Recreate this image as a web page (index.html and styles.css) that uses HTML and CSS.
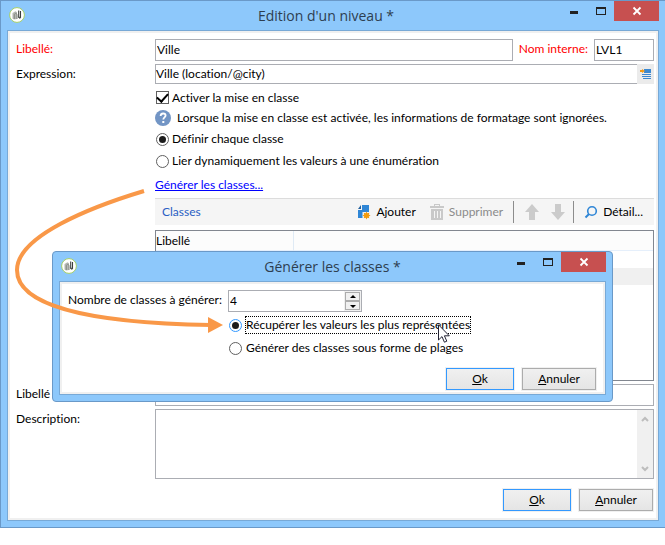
FILE: index.html
```html
<!DOCTYPE html>
<html lang="fr">
<head>
<meta charset="utf-8">
<title>Edition d'un niveau</title>
<link rel="stylesheet" href="styles.css">
</head>
<body>
<svg class="defs" aria-hidden="true">
  <symbol id="logo" viewBox="0 0 16 16">
    <circle cx="8" cy="8" r="7.400" fill="#fff" stroke="#a5cf66"/>
    <path d="M3.500 6 6.500 4.200 8 5.200V12L5 12.500 3.500 11.500Z" fill="#b4b7b2"/>
    <path d="M5.300 12V8c0-1 .8-1.600 1.500-1.600S8 7 8 7.800V12" fill="none" stroke="#868a84"/>
    <path d="M9.700 3.500v6.700l1.800.4V4" fill="none" stroke="#3c403c" stroke-width="1.100"/>
    <path d="M8.600 9.500l2.200 2.500 1.200-2z" fill="#50544f"/>
  </symbol>
  <symbol id="minimize" viewBox="0 0 10 10"><path d="M1 5h8v3H1z" fill="#222"/></symbol>
  <symbol id="maximize" viewBox="0 0 10 10"><path d="M0 1h10v8H0zM1 3v5h8V3z" fill="#222" fill-rule="evenodd"/></symbol>
  <symbol id="close" viewBox="0 0 10 10"><path d="M1.500 1.500l7 7M8.500 1.500l-7 7" stroke="#fff" stroke-width="1.800"/></symbol>
</svg>

<main class="window">
  <header class="titlebar main-title">
    <svg class="logo"><use href="#logo"/></svg>
    <h1>Edition d'un niveau *</h1>
    <div class="controls">
      <button aria-label="Réduire"><svg><use href="#minimize"/></svg></button>
      <button aria-label="Agrandir"><svg><use href="#maximize"/></svg></button>
      <button class="close" aria-label="Fermer"><svg><use href="#close"/></svg></button>
    </div>
  </header>

  <form class="pane">
    <div class="form">
      <label class="required" for="label">Libellé:</label>
      <div class="names">
        <input class="text wide" id="label" type="text" value="Ville">
        <label class="required" for="name">Nom interne:</label>
        <input class="text short" id="name" type="text" value="LVL1">
      </div>

      <label for="expression">Expression:</label>
      <div class="expression">
        <input class="text wide" id="expression" type="text" value="Ville (location/@city)">
        <button class="picker" type="button" aria-label="Modifier l'expression">
          <svg viewBox="0 0 12 12"><path d="M4 1h7v4H4zM2 6h9v1H2zM2 8h9v1H2zM3 10h8v1H3z" fill="#3c88d0"/><path d="M0 2h2V1l3 2-3 2V4H0z" fill="#f39a14"/></svg>
        </button>
      </div>

      <div class="settings">
        <label class="option"><input type="checkbox" checked>Activer la mise en classe</label>
        <p class="option note">
          <svg viewBox="0 0 16 16"><circle cx="8" cy="8" r="8" fill="#7295c5"/><path d="M5.600 6c.1-1.700 1.100-2.500 2.500-2.500 1.500 0 2.500.8 2.500 2.100 0 1.800-2.300 1.900-2.300 4" fill="none" stroke="#fff" stroke-width="1.800"/><path d="M7.300 11h2v2h-2z" fill="#fff"/></svg>
          Lorsque la mise en classe est activée, les informations de formatage sont ignorées.
        </p>
        <label class="option"><input type="radio" name="mode" checked>Définir chaque classe</label>
        <label class="option"><input type="radio" name="mode">Lier dynamiquement les valeurs à une énumération</label>
        <a class="generate" href="#generate">Générer les classes...</a>

        <div class="toolbar">
          <h2>Classes</h2>
          <button type="button"><svg viewBox="0 0 14 16"><path d="M5 1h7v7H9v6H1V6h4z" fill="#2f86d6"/><path d="M1 5 4 1v4z" fill="#215f9d"/><path d="M5.500 8H14v7H5.500z" fill="#f5f5f5"/><path d="m9.500 7.500.9 1.700 1.900-.5-.5 1.900 1.700.9-1.700.9.5 1.900-1.900-.5-.9 1.700-.9-1.700-1.900.5.500-1.900-1.700-.9 1.700-.9-.5-1.900 1.900.5z" fill="#f39a0c"/></svg>Ajouter</button>
          <button type="button" disabled><svg viewBox="0 0 14 16"><path d="M0 2h4V0h6v2h4v2H0zM5 1v1h4V1zM1 5h12v11H1zM4 7v7h1V7zM7 7v7h1V7zM10 7v7h1V7z" fill="#c9c9c9" fill-rule="evenodd"/></svg>Supprimer</button>
          <div class="order">
            <button type="button" disabled aria-label="Monter"><svg viewBox="0 0 14 16"><path d="M7 0l7 8h-4v8H4V8H0z" fill="#cbcbcb"/></svg></button>
            <button type="button" disabled aria-label="Descendre"><svg viewBox="0 0 14 16"><path d="M7 16l7-8h-4V0H4v8H0z" fill="#cbcbcb"/></svg></button>
          </div>
          <button type="button"><svg viewBox="0 0 14 16"><circle cx="8" cy="7" r="4.300" fill="none" stroke="#2f86d6" stroke-width="1.600"/><path d="M5 10l-3.500 3.500" stroke="#2f86d6" stroke-width="2"/></svg>Détail...</button>
        </div>

        <div class="list">
          <table>
            <thead><tr><th class="name">Libellé</th><th></th></tr></thead>
            <tbody>
              <tr><td></td><td></td></tr>
              <tr class="alternate"><td></td><td></td></tr>
            </tbody>
          </table>
        </div>
      </div>

      <label for="other">Libellé</label>
      <input class="text" id="other" type="text">

      <label for="description">Description:</label>
      <div class="memo">
        <textarea id="description"></textarea>
        <div class="scrollbar" aria-hidden="true">
          <svg viewBox="0 0 8 8"><path d="M1 6l3-3 3 3" fill="none" stroke="#bdbdbd" stroke-width="2"/></svg>
          <svg viewBox="0 0 8 8"><path d="M1 2l3 3 3-3" fill="none" stroke="#bdbdbd" stroke-width="2"/></svg>
        </div>
      </div>
    </div>
    <footer class="actions">
      <button class="push default" type="button"><span><u>O</u>k</span></button>
      <button class="push" type="button"><span><u>A</u>nnuler</span></button>
    </footer>
  </form>

  <section class="window dialog" id="generate" role="dialog" aria-labelledby="dialog-title">
    <header class="titlebar">
      <svg class="logo"><use href="#logo"/></svg>
      <h1 id="dialog-title">Générer les classes *</h1>
      <div class="controls">
        <button aria-label="Réduire"><svg><use href="#minimize"/></svg></button>
        <button aria-label="Agrandir"><svg><use href="#maximize"/></svg></button>
        <button class="close" aria-label="Fermer"><svg><use href="#close"/></svg></button>
      </div>
    </header>
    <form class="pane">
      <div class="form count-form">
        <label for="count">Nombre de classes à générer:</label>
        <div class="spin">
          <input class="text" id="count" type="number" value="4">
          <div class="steps">
            <button type="button" aria-label="Augmenter"><svg viewBox="0 0 6 4"><path d="M3 0l3 3H0z"/></svg></button>
            <button type="button" aria-label="Diminuer"><svg viewBox="0 0 6 4"><path d="M0 1h6L3 4z"/></svg></button>
          </div>
        </div>
        <div class="choices">
          <label class="option focused"><input type="radio" name="method" checked><span>Récupérer les valeurs les plus représentées</span></label>
          <label class="option"><input type="radio" name="method"><span>Générer des classes sous forme de plages</span></label>
        </div>
      </div>
      <footer class="actions">
        <button class="push default" type="button"><span><u>O</u>k</span></button>
        <button class="push" type="button"><span><u>A</u>nnuler</span></button>
      </footer>
    </form>
  </section>

  <svg class="callout" viewBox="0 0 240 160" aria-hidden="true">
    <path d="M143 11C90 27 16 56 16 90C16 125 85 143 210 145" fill="none" stroke="#f99848" stroke-width="4"/>
    <path d="M207 137l15 8-15 8z" fill="#f99848"/>
  </svg>
  <svg class="pointer" viewBox="0 0 12 19" aria-hidden="true">
    <path d="M.5.800v15.200l3.500-3.400 2.400 5.600 2.400-1-2.400-5.400h4.900z" fill="#fff" stroke="#223"/>
  </svg>
</main>
</body>
</html>
```

FILE: styles.css
```css
* {
  box-sizing: border-box;
}

body {
  margin: 0;
  background: #fff;
  color: #000;
  font: 12px/16px Lato, "Noto Sans", sans-serif;
  font-variant-ligatures: none;
}

button,
input,
textarea {
  margin: 0;
  padding: 0;
  border: 0;
  border-radius: 0;
  background: none;
  color: inherit;
  font: inherit;
}

h1,
h2,
p {
  margin: 0;
  font-weight: 400;
}

.defs {
  position: absolute;
  width: 0;
  height: 0;
}

/* Window frame */

.window {
  position: relative;
  padding: 0 6px 6px;
  border: 1px solid #6a99c8;
  border-right: 0;
  background: #8dc8fb;
}

.titlebar {
  display: grid;
  grid-template-columns: 1fr auto 1fr;
  height: 29px;
}

.titlebar h1 {
  padding-top: 5px;
  color: #2d3e50;
  font: 14px/20px "Open Sans", "Noto Sans", sans-serif;
}

.main-title h1 {
  padding-right: 14px;
}

.logo {
  width: 16px;
  height: 16px;
  margin: 6px 2px;
}

.controls {
  display: flex;
  justify-content: flex-end;
}

.controls button {
  display: grid;
  place-items: center;
  width: 27px;
  height: 20px;
}

.controls .close {
  width: 45px;
  background: #c75050;
}

.controls svg {
  width: 10px;
  height: 10px;
}

.pane {
  padding: 8px 4px 9px 8px;
  border: 1px solid #78a9d6;
  outline: 2px solid #f0f0f0;
  outline-offset: -3px;
  background: #fff;
}

/* Form */

.form {
  display: grid;
  grid-template-columns: 139px 1fr;
  gap: 3px 0;
}

.form > label,
.names label {
  padding-top: 2px;
}

.required {
  color: #f00;
}

.text {
  width: 100%;
  height: 22px;
  padding: 0 1px 2px;
  border: 1px solid #abadb3;
  background: #fff;
}

.names {
  display: flex;
  gap: 6px;
}

.names .wide,
.expression .wide {
  flex: 1;
  min-width: 0;
}

.names .short {
  width: 60px;
}

.expression {
  display: flex;
}

.expression .text {
  height: 20px;
  padding-left: 0;
  border-right: 0;
}

.picker {
  display: grid;
  place-items: center;
  width: 17px;
  background: #ebebeb;
}

.picker svg {
  width: 12px;
  height: 12px;
}

.settings {
  display: grid;
  grid-column: 2;
  grid-template-rows: 21px 20px 22px 22px 26px;
}

.option {
  display: flex;
  align-items: center;
  gap: 3px;
}

.option input {
  display: grid;
  place-items: center;
  width: 13px;
  height: 13px;
  margin-left: 1px;
  border: 1px solid #606060;
  background: #fff;
  appearance: none;
}

.option input[type="radio"] {
  border-radius: 50%;
}

.option input[type="radio"]:checked::before {
  width: 7px;
  height: 7px;
  border-radius: 50%;
  background: #1c1c1c;
  content: "";
}

.option input[type="checkbox"]:checked::before {
  width: 9px;
  height: 5px;
  border: solid #000;
  border-width: 0 0 2px 2px;
  transform: translateY(-1px) rotate(-48deg);
  content: "";
}

.note {
  gap: 6px;
}

.note svg {
  width: 16px;
  height: 16px;
}

.generate {
  align-self: center;
  justify-self: start;
  color: #00f;
}

/* Class list */

.toolbar {
  display: flex;
  align-items: center;
  gap: 14px;
  height: 27px;
  padding: 0 11px 0 7px;
  border-top: 1px solid #dcdcdc;
  background: #f5f5f5;
}

.toolbar h2 {
  margin-right: auto;
  color: #2a5fc4;
  font-size: 12px;
}

.toolbar button {
  display: flex;
  align-items: center;
  gap: 5px;
}

.toolbar button:disabled {
  color: #8b8b8b;
}

.toolbar svg {
  width: 14px;
  height: 16px;
}

.order {
  display: flex;
  align-items: center;
  gap: 12px;
  height: 22px;
  margin: 0 -4px;
  padding: 0 8px 0 11px;
  border: solid #8c8c8c;
  border-width: 0 1px;
}

.list {
  height: 151px;
  margin-top: 5px;
  border: 1px solid #828790;
}

.list table {
  width: 100%;
  border-spacing: 0;
  table-layout: fixed;
}

.list th {
  height: 20px;
  padding: 0;
  border-bottom: 1px solid #e5effb;
  background: #fcfcfc;
  font-weight: 400;
  text-align: left;
}

.list .name {
  width: 138px;
  border-right: 1px solid #dfeaf5;
}

.list td {
  height: 17px;
  padding: 0;
}

.list .alternate td {
  background: #f0f0f0;
}

.memo {
  display: flex;
  height: 70px;
  border: 1px solid #abadb3;
}

.memo textarea {
  flex: 1;
  resize: none;
}

.scrollbar {
  display: flex;
  flex-direction: column;
  justify-content: space-between;
  align-items: center;
  width: 16px;
  padding: 5px 0;
  background: #f0f0f0;
}

.scrollbar svg {
  width: 8px;
  height: 8px;
}

/* Buttons */

.actions {
  display: flex;
  justify-content: flex-end;
  gap: 8px;
  padding: 10px 1px 0 0;
}

.push {
  width: 74px;
  height: 22px;
  border: 1px solid #acacac;
  outline: 1px solid #f0f0f0;
  background: linear-gradient(#f0f0f0, #e5e5e5);
}

.push.default {
  width: 68px;
  border-color: #3399ff;
}

/* Generation dialog */

.dialog {
  position: absolute;
  top: 250px;
  right: 52px;
  left: 51px;
  border-right: 1px solid #6a99c8;
  border-radius: 4px;
}

.dialog .pane {
  padding-right: 9px;
  padding-bottom: 4px;
}

.dialog .actions {
  padding: 9px 0 0;
}

.count-form {
  grid-template-columns: 160px 1fr;
  gap: 2px 0;
}

.spin {
  display: flex;
  width: 134px;
  border: 1px solid #abadb3;
}

.spin .text {
  flex: 1;
  height: 20px;
  min-width: 0;
  border: 0;
  appearance: textfield;
}

.spin .text::-webkit-inner-spin-button {
  display: none;
}

.steps {
  display: grid;
  width: 17px;
  padding: 1px;
  background: #f0f0f0;
}

.steps button {
  display: grid;
  place-items: center;
  border: 1px solid #acacac;
}

.steps svg {
  width: 6px;
  height: 4px;
}

.choices {
  display: grid;
  grid-column: 2;
  grid-template-rows: 22px 22px;
  gap: 1px;
}

.choices span {
  border: 1px dotted transparent;
}

.choices .focused span {
  border-color: #000;
}

.choices .focused input {
  border-color: #3399ff;
}

/* Annotation drawn over both windows */

.callout {
  position: absolute;
  top: 179px;
  left: 0;
  width: 240px;
  height: 160px;
  pointer-events: none;
}

.pointer {
  position: absolute;
  top: 323px;
  left: 437px;
  width: 12px;
  height: 19px;
  pointer-events: none;
}
```
